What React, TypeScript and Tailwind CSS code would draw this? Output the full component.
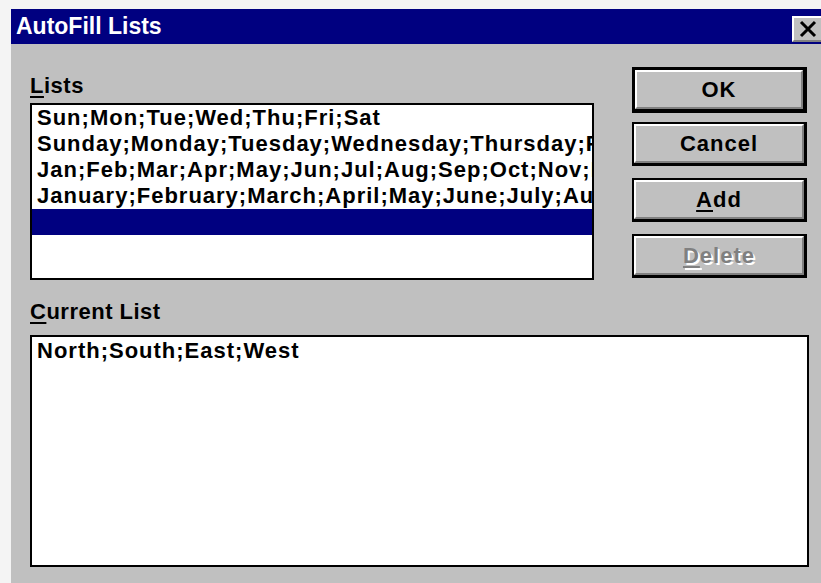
const font = { fontFamily: '"Liberation Sans", Arial, sans-serif' };

const lists = [
  "Sun;Mon;Tue;Wed;Thu;Fri;Sat",
  "Sunday;Monday;Tuesday;Wednesday;Thursday;Friday;Saturday",
  "Jan;Feb;Mar;Apr;May;Jun;Jul;Aug;Sep;Oct;Nov;Dec",
  "January;February;March;April;May;June;July;August;September;October;November;December",
];

const Button = ({ children, isDefault = false, className = "" }) => (
  <div
    className={
      "bg-black " +
      (isDefault ? "h-[46px] p-[3px] pb-[4px] pr-[4px] " : "h-[44px] p-[2px] pb-[3px] pr-[3px] ") +
      className
    }
  >
    <div className="h-full bg-[#c0c0c0] border-t-2 border-l-2 border-white border-b-2 border-r-2 border-b-[#808080] border-r-[#808080] flex items-center justify-center">
      {children}
    </div>
  </div>
);

const App = () => {
  return (
    <div className="w-[821px] h-[583px] overflow-hidden bg-[#f4f4f4] pl-[11px] pt-[9px] text-black" style={font}>
      <div className="h-full flex flex-col">
        {/* caption */}
        <div className="h-[35px] bg-[#000080] flex items-center justify-between pl-[5px]">
          <span className="text-white font-bold text-[23px] leading-none">AutoFill Lists</span>
          <div className="w-[29px] h-[26px] mt-[4px] bg-[#c0c0c0] border-t-2 border-l-2 border-white border-b-2 border-b-[#808080] flex items-center justify-center">
            <svg width="20" height="18" viewBox="0 0 20 18">
              <path d="M3 2 L17 16 M17 2 L3 16" stroke="#000" strokeWidth="3" />
            </svg>
          </div>
        </div>

        {/* body */}
        <div className="flex-1 bg-[#c0c0c0] pl-[19px] pt-[23px]">
          <div className="flex">
            <div className="mt-[7px]">
              <div className="text-[22px] font-bold leading-[24px] h-[24px] tracking-[0.5px]">
                <span className="underline underline-offset-[3px] decoration-2">L</span>ists
              </div>
              <div className="mt-[5px] w-[564px] h-[177px] bg-white border-2 border-black overflow-hidden">
                {lists.map((l) => (
                  <div key={l} className="h-[26px] leading-[26px] pl-[5px] text-[22px] font-bold tracking-[1px] whitespace-nowrap overflow-hidden">
                    {l}
                  </div>
                ))}
                <div className="h-[26px] bg-[#000080]" />
              </div>
            </div>

            <div className="ml-[38px] w-[175px] flex flex-col text-[22px] font-bold tracking-[1px]">
              <Button isDefault>
                <span>OK</span>
              </Button>
              <Button className="mt-[9px]">
                <span>Cancel</span>
              </Button>
              <Button className="mt-[12px]">
                <span>
                  <span className="underline underline-offset-[3px] decoration-2">A</span>dd
                </span>
              </Button>
              <Button className="mt-[12px]">
                <span className="text-[#808080] [text-shadow:2px_2px_0_#ffffff]">
                  <span className="underline underline-offset-[3px] decoration-2">D</span>elete
                </span>
              </Button>
            </div>
          </div>

          <div className="mt-[20px] text-[22px] font-bold leading-[24px] h-[24px] tracking-[0.5px]">
            <span className="underline underline-offset-[3px] decoration-2">C</span>urrent List
          </div>
          <div className="mt-[11px] w-[779px] h-[232px] bg-white border-2 border-black pl-[5px] pt-[1px]">
            <div className="text-[22px] font-bold leading-[26px] tracking-[1px]">North;South;East;West</div>
          </div>
        </div>
      </div>
    </div>
  );
};

export default App;
